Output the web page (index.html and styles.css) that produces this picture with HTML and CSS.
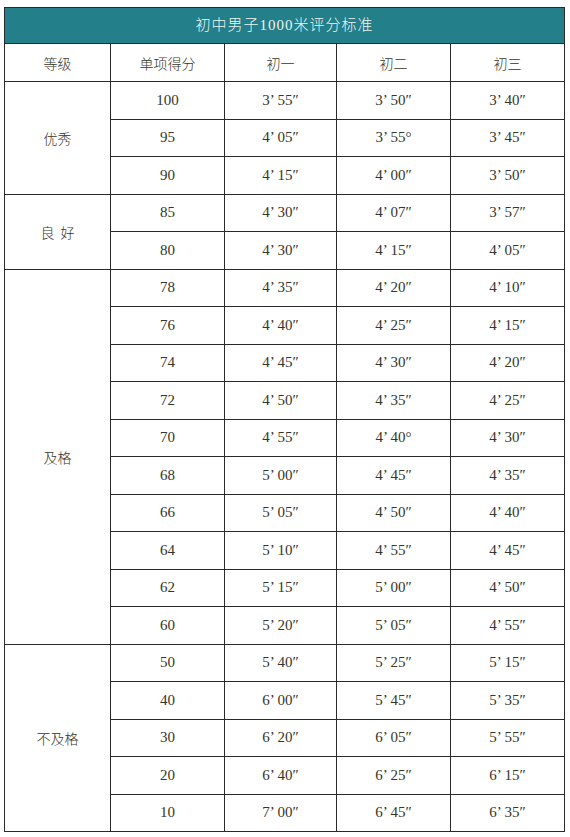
FILE: index.html
```html
<!DOCTYPE html>
<html lang="zh">
<head>
<meta charset="utf-8">
<link rel="stylesheet" href="styles.css">
</head>
<body>
<table class="score">
  <colgroup>
    <col class="c1"><col class="c2"><col class="c3"><col class="c4"><col class="c5">
  </colgroup>
  <tr class="title"><td colspan="5">初中男子1000米评分标准</td></tr>
  <tr class="head"><td>等级</td><td>单项得分</td><td>初一</td><td>初二</td><td>初三</td></tr>
  <tr><td rowspan="3" class="grade">优秀</td><td>100</td><td>3’ 55″</td><td>3’ 50″</td><td>3’ 40″</td></tr>
  <tr><td>95</td><td>4’ 05″</td><td>3’ 55°</td><td>3’ 45″</td></tr>
  <tr><td>90</td><td>4’ 15″</td><td>4’ 00″</td><td>3’ 50″</td></tr>
  <tr><td rowspan="2" class="grade">良&nbsp;&nbsp;好</td><td>85</td><td>4’ 30″</td><td>4’ 07″</td><td>3’ 57″</td></tr>
  <tr><td>80</td><td>4’ 30″</td><td>4’ 15″</td><td>4’ 05″</td></tr>
  <tr><td rowspan="10" class="grade">及格</td><td>78</td><td>4’ 35″</td><td>4’ 20″</td><td>4’ 10″</td></tr>
  <tr><td>76</td><td>4’ 40″</td><td>4’ 25″</td><td>4’ 15″</td></tr>
  <tr><td>74</td><td>4’ 45″</td><td>4’ 30″</td><td>4’ 20″</td></tr>
  <tr><td>72</td><td>4’ 50″</td><td>4’ 35″</td><td>4’ 25″</td></tr>
  <tr><td>70</td><td>4’ 55″</td><td>4’ 40°</td><td>4’ 30″</td></tr>
  <tr><td>68</td><td>5’ 00″</td><td>4’ 45″</td><td>4’ 35″</td></tr>
  <tr><td>66</td><td>5’ 05″</td><td>4’ 50″</td><td>4’ 40″</td></tr>
  <tr><td>64</td><td>5’ 10″</td><td>4’ 55″</td><td>4’ 45″</td></tr>
  <tr><td>62</td><td>5’ 15″</td><td>5’ 00″</td><td>4’ 50″</td></tr>
  <tr><td>60</td><td>5’ 20″</td><td>5’ 05″</td><td>4’ 55″</td></tr>
  <tr><td rowspan="5" class="grade">不及格</td><td>50</td><td>5’ 40″</td><td>5’ 25″</td><td>5’ 15″</td></tr>
  <tr><td>40</td><td>6’ 00″</td><td>5’ 45″</td><td>5’ 35″</td></tr>
  <tr><td>30</td><td>6’ 20″</td><td>6’ 05″</td><td>5’ 55″</td></tr>
  <tr><td>20</td><td>6’ 40″</td><td>6’ 25″</td><td>6’ 15″</td></tr>
  <tr><td>10</td><td>7’ 00″</td><td>6’ 45″</td><td>6’ 35″</td></tr>
</table>
</body>
</html>
```
FILE: styles.css
```css
html, body {
  margin: 0;
  padding: 0;
  background: #ffffff;
}
body {
  padding: 7px 6px 0 4px;
}
.score {
  width: 560px;
  border-collapse: collapse;
  table-layout: fixed;
  font-family: "Liberation Serif", "Noto Sans CJK SC", serif;
  font-size: 15px;
  color: #35352a;
}
.c1 { width: 106px; }
.c2 { width: 114px; }
.c3 { width: 112px; }
.c4 { width: 114px; }
.c5 { width: 114px; }
.score td {
  border: 1.5px solid #2a2a2a;
  text-align: center;
  vertical-align: middle;
  height: 36.5px;
  padding: 0;
  line-height: 1;
}
.score .title td {
  background: #237f89;
  color: #eef4f2;
  height: 35px;
  font-size: 15px;
  letter-spacing: 1px;
  font-weight: 300;
}
.score .head td {
  height: 37px;
  font-family: "Noto Sans CJK SC", sans-serif;
  font-size: 14px;
  font-weight: 300;
}
.score td.grade {
  font-family: "Noto Sans CJK SC", sans-serif;
  font-size: 14px;
  font-weight: 300;
}
```
